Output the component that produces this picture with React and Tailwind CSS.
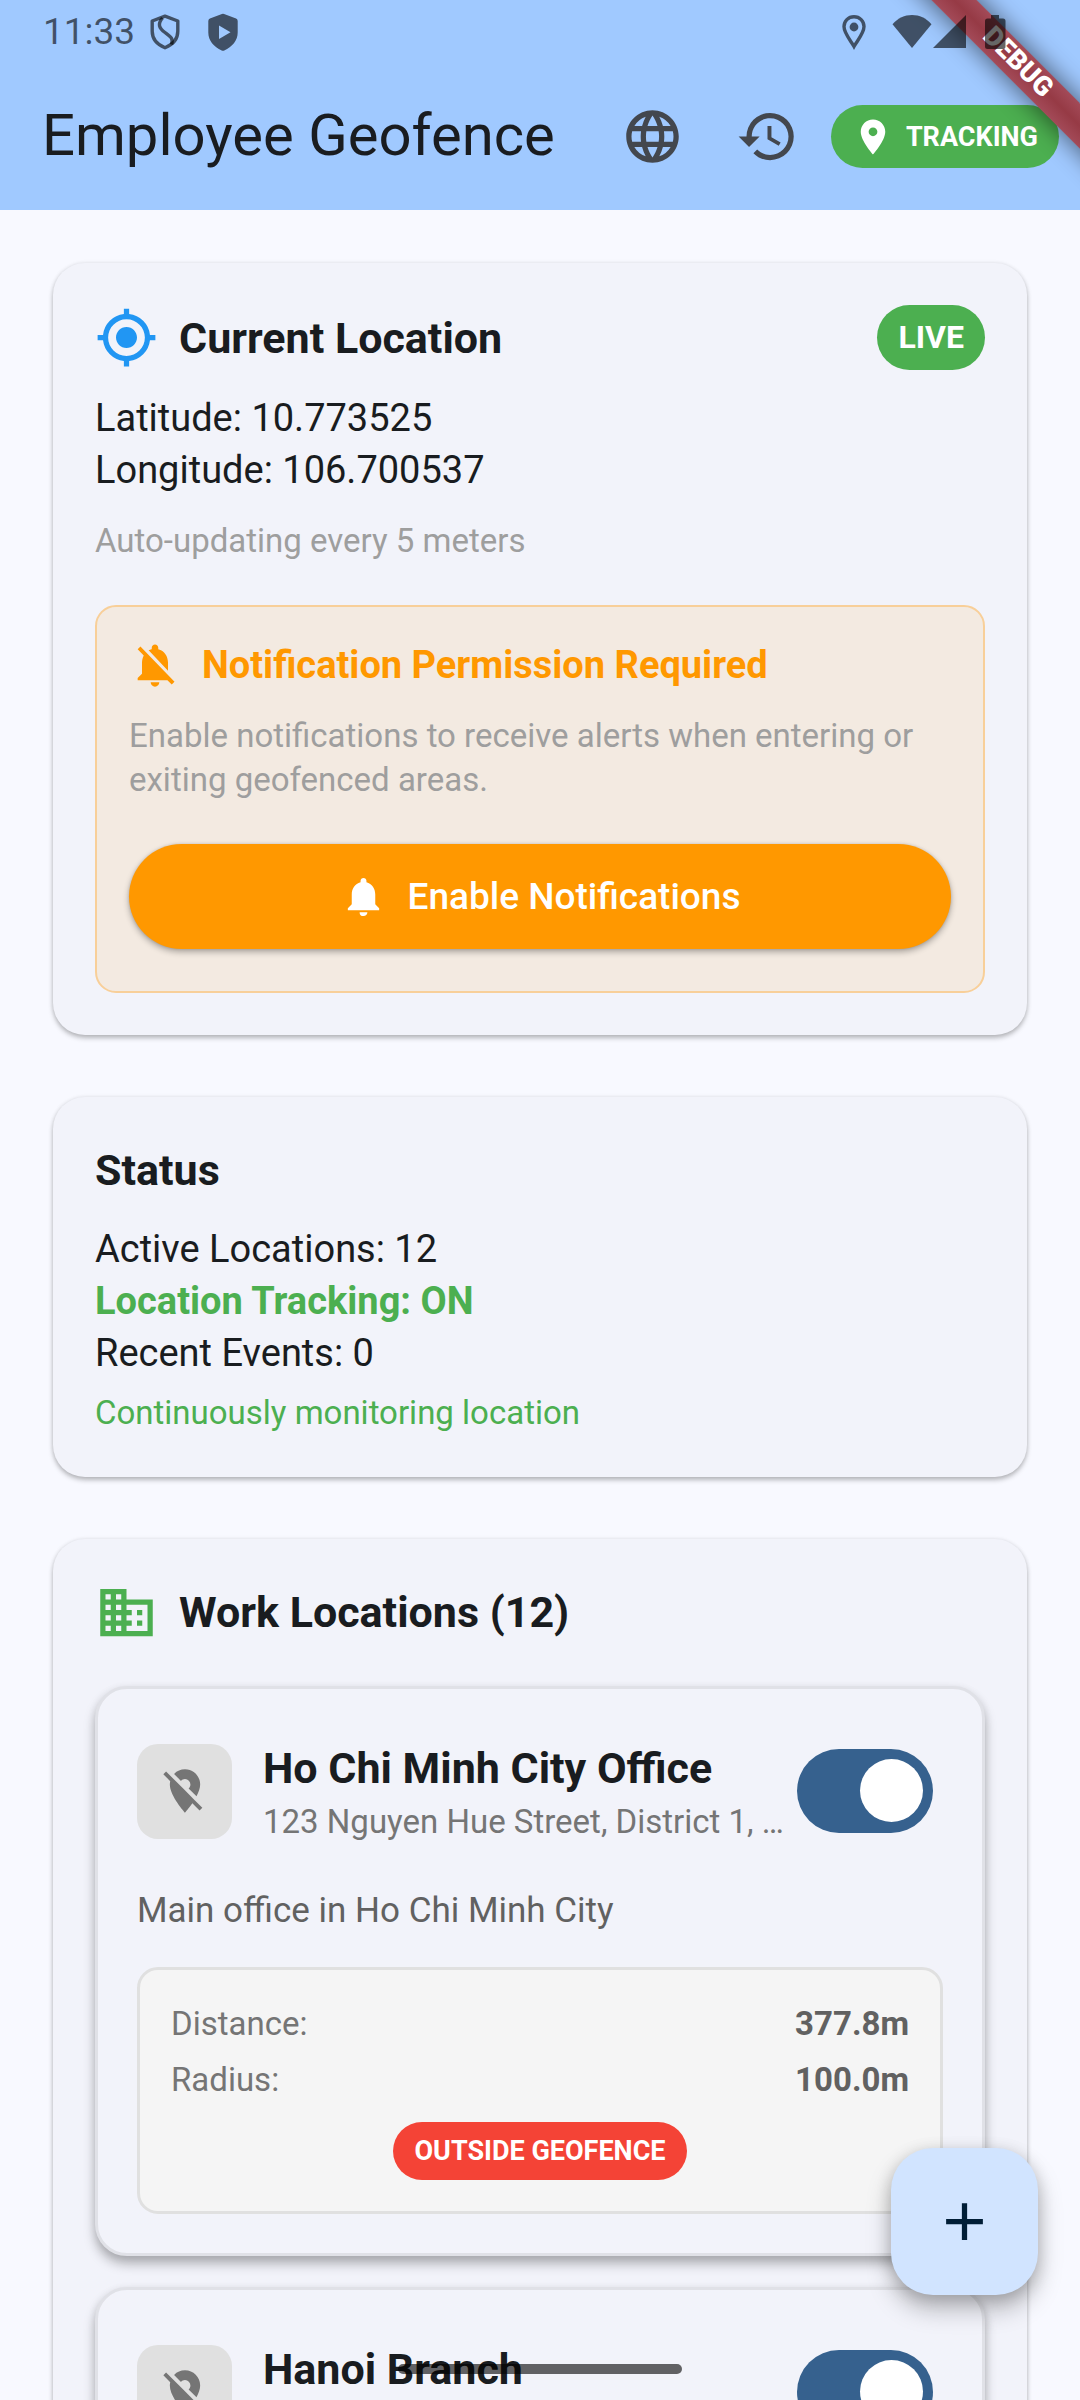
import React, { useState } from "react";
import {
  MdAdd,
  MdBusiness,
  MdHistory,
  MdLanguage,
  MdLocationOff,
  MdLocationOn,
  MdMyLocation,
  MdNotifications,
  MdNotificationsOff,
} from "react-icons/md";

const LOCATIONS = [
  {
    id: "hcm",
    name: "Ho Chi Minh City Office",
    address: "123 Nguyen Hue Street, District 1, …",
    description: "Main office in Ho Chi Minh City",
    distance: "377.8m",
    radius: "100.0m",
  },
  { id: "hanoi", name: "Hanoi Branch" },
];

function StatusBar() {
  return (
    <div className="relative z-20 flex h-[63px] items-center pl-[43px] pr-[73px] text-black/60">
      <span className="text-[37px] leading-[52px]">11:33</span>
      <svg viewBox="0 0 42 42" className="ml-[9px] size-[42px]" fill="none" stroke="currentColor" aria-hidden="true">
        <path d="M21 5.2 8.2 10v10.2c0 7.6 5.2 13.4 12.8 16.6 7.6-3.200 12.800-9 12.800-16.600V10Z" strokeWidth="3.400" strokeLinejoin="round" />
        <path d="M18.500 7c-5.200 6-3.500 10 2.500 14.500 6 4.500 8.500 6 6.500 12" strokeWidth="3.400" />
      </svg>
      <svg viewBox="0 0 42 42" className="ml-4 size-[42px]" fill="currentColor" aria-hidden="true">
        <path
          fillRule="evenodd"
          d="M19.900 3a3 3 0 0 1 2.200 0l12 4.600a2.600 2.600 0 0 1 1.600 2.400v11.500c0 8-5.500 14.500-13.400 17.900a3 3 0 0 1-2.600 0C11.800 36 6.300 29.500 6.300 21.500V10a2.600 2.600 0 0 1 1.600-2.400ZM17 14.500v13.400L28.500 21.200Z"
        />
      </svg>
      <div className="ml-auto flex items-center">
        <svg viewBox="0 0 42 42" className="mr-4 size-[42px]" aria-hidden="true">
          <path
            d="M21 5.700c-5.800 0-10 4.400-10 9.900C11 22.500 18 30 21 35.400 24 30 31 22.500 31 15.600c0-5.500-4.200-9.900-10-9.900Z"
            fill="none"
            stroke="currentColor"
            strokeWidth="3.400"
          />
          <circle cx="21" cy="16" r="4.400" fill="currentColor" />
        </svg>
        <svg viewBox="0 0 42 42" className="size-[42px]" fill="currentColor" aria-hidden="true">
          <path d="M1.500 13.300C7 7 13.500 4 21 4s14 3 19.500 9.300L21 37Z" />
        </svg>
        <svg viewBox="0 0 34 42" className="h-[42px] w-[34px]" fill="currentColor" aria-hidden="true">
          <path d="M33 4v33H0Z" />
        </svg>
        <svg viewBox="0 0 24 42" className="ml-4 h-[42px] w-[24px]" fill="currentColor" aria-hidden="true">
          <path d="M8 4h8v3.500h4a2.500 2.500 0 0 1 2.500 2.500v25.500a2.500 2.500 0 0 1-2.500 2.500H4.500A2.500 2.500 0 0 1 2 35.500V10a2.500 2.500 0 0 1 2.500-2.500H8Z" />
        </svg>
      </div>
    </div>
  );
}

function DebugBanner() {
  return (
    <div className="pointer-events-none absolute right-0 top-0 z-10 size-[220px] overflow-hidden">
      <div className="absolute left-[7px] top-[47px] flex h-[32px] w-[300px] rotate-45 items-center justify-center bg-linear-to-b from-[#a34a58] via-[#963a45] to-[#a34a58] pb-[3px] text-[27px] font-black leading-[29px] text-white shadow-[0_0_22px_4px_rgba(0,0,0,0.45)]">
        DEBUG
      </div>
    </div>
  );
}

function AppBar() {
  return (
    <div className="flex h-[147px] items-center pl-[42px] pr-[21px]">
      <h1 className="min-w-0 flex-1 truncate pb-1 text-[58px] leading-[74px]">Employee Geofence</h1>
      <div className="flex shrink-0 items-center text-[#43474e]">
        <button type="button" aria-label="Language" className="mr-[52px]">
          <MdLanguage className="size-[63px]" />
        </button>
        <button type="button" aria-label="History" className="mr-[32px]">
          <MdHistory className="size-[63px]" />
        </button>
        <button
          type="button"
          className="flex h-[63px] items-center gap-[12px] rounded-full bg-[#4caf50] px-[21px] text-[27px] font-bold leading-[38px] text-white"
        >
          <MdLocationOn className="size-[42px]" />
          TRACKING
        </button>
      </div>
    </div>
  );
}

function Card({ children }) {
  return (
    <section className="rounded-[32px] bg-[#f2f3fa] p-[42px] shadow-[0_3px_5px_rgba(0,0,0,0.26),0_0_4px_rgba(0,0,0,0.08)]">
      {children}
    </section>
  );
}

function NotificationPrompt() {
  return (
    <div className="mt-[42px] rounded-[21px] border-2 border-[#f8cf99] bg-[#f3eae1] px-[32px] pb-[42px] pt-[32px]">
      <div className="flex items-center gap-[21px] text-[#ff9800]">
        <MdNotificationsOff className="size-[52px]" />
        <h3 className="text-[38px] font-bold leading-[52px]">Notification Permission Required</h3>
      </div>
      <p className="mt-[23px] text-[33px] leading-[44px] text-[#9e9e9e]">
        Enable notifications to receive alerts when entering or exiting geofenced areas.
      </p>
      <button
        type="button"
        className="mt-[42px] flex h-[105px] w-full items-center justify-center gap-[21px] rounded-full bg-[#ff9800] text-[37px] font-medium leading-[52px] text-white shadow-[0_3px_6px_rgba(0,0,0,0.3),0_0_3px_rgba(0,0,0,0.12)]"
      >
        <MdNotifications className="size-[47px]" />
        Enable Notifications
      </button>
    </div>
  );
}

function CurrentLocation() {
  return (
    <Card>
      <div className="flex items-center">
        <MdMyLocation className="size-[63px] text-[#2196f3]" />
        <h2 className="ml-[21px] flex-1 text-[43px] font-bold leading-[60px]">Current Location</h2>
        <span className="rounded-full bg-[#4caf50] px-[21px] py-[10px] text-[32px] font-bold leading-[45px] text-white">
          LIVE
        </span>
      </div>
      <div className="mt-[22px] text-[38px] leading-[52px]">
        <p>Latitude: 10.773525</p>
        <p>Longitude: 106.700537</p>
      </div>
      <p className="mt-[23px] text-[33px] leading-[44px] text-[#9e9e9e]">Auto-updating every 5 meters</p>
      <NotificationPrompt />
    </Card>
  );
}

function Status() {
  return (
    <Card>
      <h2 className="text-[43px] font-bold leading-[63px]">Status</h2>
      <div className="mt-[21px] text-[38px] leading-[52px]">
        <p>Active Locations: 12</p>
        <p className="font-bold text-[#4caf50]">Location Tracking: ON</p>
        <p>Recent Events: 0</p>
      </div>
      <p className="mt-[12px] text-[33px] leading-[44px] text-[#4caf50]">Continuously monitoring location</p>
    </Card>
  );
}

function Switch({ label, id }) {
  const [on, setOn] = useState(true);
  return (
    <span className="relative mx-[10px] inline-flex h-[84px] w-[136px] shrink-0">
      <input
        id={id}
        type="checkbox"
        role="switch"
        aria-label={label}
        checked={on}
        onChange={(e) => setOn(e.target.checked)}
        className="peer size-full cursor-pointer appearance-none rounded-full bg-[#c3c6cf] checked:bg-[#36618e]"
      />
      <span className="pointer-events-none absolute left-[10px] top-[10px] size-[63px] rounded-full bg-white peer-checked:left-[63px]" />
    </span>
  );
}

function LocationCard({ location }) {
  return (
    <article className="rounded-[32px] border-[3px] border-[#e0e1e7] bg-[#f2f3fa] p-[39px] shadow-[0_8px_12px_rgba(0,0,0,0.27),0_2px_8px_rgba(0,0,0,0.08)]">
      <div className="flex h-[126px] items-center">
        <span className="flex size-[95px] shrink-0 items-center justify-center rounded-[21px] bg-[#e0e0e0] text-[#757575]">
          <MdLocationOff className="size-[52px]" />
        </span>
        <div className="ml-[31px] min-w-0 flex-1">
          <h3 className="truncate text-[43px] font-bold leading-[60px]">{location.name}</h3>
          <p className="mt-[2px] min-h-[44px] truncate text-[33px] leading-[44px] text-[#757575]">{location.address}</p>
        </div>
        <Switch id={`switch-${location.id}`} label={location.name} />
      </div>
      {location.description && (
        <>
          <p className="mt-[33px] text-[35px] leading-[48px] text-[#616161]">{location.description}</p>
          <div className="mt-[32px] flex flex-col rounded-[21px] border-[3px] border-[#e0e0e0] bg-[#f5f5f5] px-[31px] pb-[31px] pt-[32px]">
            <dl className="flex flex-col gap-[12px] text-[33px] leading-[44px]">
              <div className="flex justify-between">
                <dt className="text-[#757575]">Distance:</dt>
                <dd className="font-bold text-[#616161]">{location.distance}</dd>
              </div>
              <div className="flex justify-between">
                <dt className="text-[#757575]">Radius:</dt>
                <dd className="font-bold text-[#616161]">{location.radius}</dd>
              </div>
            </dl>
            <span className="mt-[20px] self-center rounded-full bg-[#f44336] px-[21px] py-[10px] text-[27px] font-bold leading-[38px] text-white">
              OUTSIDE GEOFENCE
            </span>
          </div>
        </>
      )}
    </article>
  );
}

function WorkLocations() {
  return (
    <Card>
      <div className="flex items-center gap-[21px]">
        <MdBusiness className="size-[63px] text-[#4caf50]" />
        <h2 className="text-[43px] font-bold leading-[63px]">Work Locations (12)</h2>
      </div>
      <div className="mt-[42px] flex flex-col gap-[31px]">
        {LOCATIONS.map((location) => (
          <LocationCard key={location.id} location={location} />
        ))}
      </div>
    </Card>
  );
}

export default function App() {
  return (
    <div className="relative flex h-screen flex-col overflow-hidden bg-[#f8f9ff] font-['Roboto',sans-serif] text-[#191c20]">
      <header className="shrink-0 bg-[#a0c9ff]">
        <StatusBar />
        <AppBar />
      </header>
      <DebugBanner />
      <main className="flex min-h-0 flex-1 flex-col gap-[62px] overflow-y-auto px-[53px] pt-[53px] [scrollbar-width:none] *:shrink-0">
        <CurrentLocation />
        <Status />
        <WorkLocations />
      </main>
      <button
        type="button"
        aria-label="Add location"
        className="absolute bottom-[105px] right-[42px] flex size-[147px] items-center justify-center rounded-[42px] bg-[#d1e4ff] text-[#001d36] shadow-[0_14px_24px_rgba(0,0,0,0.26),0_3px_16px_rgba(0,0,0,0.16)]"
      >
        <MdAdd className="size-[63px]" />
      </button>
      <div className="pointer-events-none absolute inset-x-0 bottom-[26px] flex justify-center">
        <span className="h-[10px] w-[284px] rounded-full bg-black/60" />
      </div>
    </div>
  );
}
